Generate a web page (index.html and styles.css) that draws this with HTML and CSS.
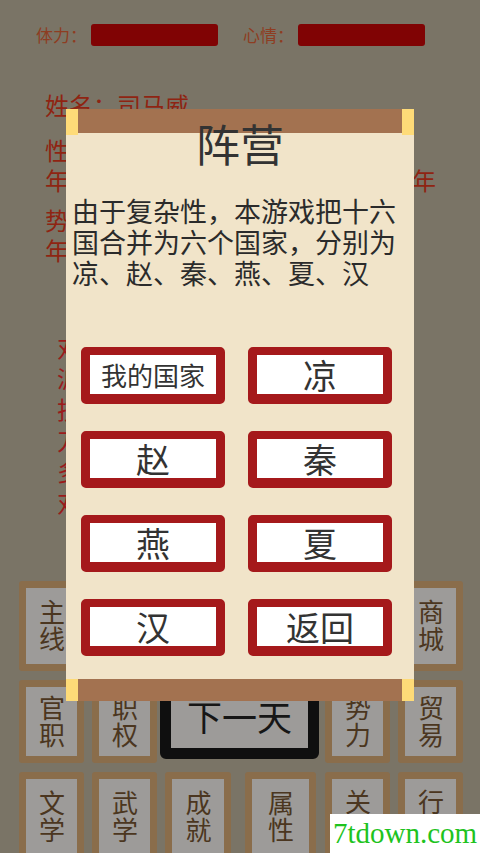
FILE: index.html
```html
<!DOCTYPE html>
<html lang="zh-CN">

<head>
    <meta charset="UTF-8">
    <meta name="viewport" content="width=device-width, initial-scale=1.0">
    <title>阵营</title>
    <link rel="stylesheet" href="styles.css">
</head>

<body>
    <div class="screen">
        <!-- 状态条 -->
        <div class="stats">
            <div class="stat">
                <span class="stat-label">体力：</span>
                <span class="stat-bar"></span>
            </div>
            <div class="stat">
                <span class="stat-label">心情：</span>
                <span class="stat-bar"></span>
            </div>
        </div>

        <!-- 人物信息 (大部分被弹窗挡住) -->
        <div class="profile">
            <p class="line">姓名：司马威</p>
            <p class="line gap-lg">性</p>
            <p class="line line-split"><span>年</span><span>年</span></p>
            <p class="line gap-sm">势</p>
            <p class="line">年</p>

            <div class="notes">
                <p>对</p>
                <p>派</p>
                <p>技</p>
                <p>刀</p>
                <p>多</p>
                <p>对</p>
            </div>
        </div>

        <!-- 底部菜单 -->
        <div class="menu">
            <div class="tile col-1"><span class="tile-text">主线</span></div>
            <div class="tile col-6"><span class="tile-text">商城</span></div>

            <div class="tile col-1"><span class="tile-text">官职</span></div>
            <div class="tile col-2"><span class="tile-text">职权</span></div>
            <button class="next-day">下一天</button>
            <div class="tile col-5"><span class="tile-text">势力</span></div>
            <div class="tile col-6"><span class="tile-text">贸易</span></div>

            <div class="tile col-1"><span class="tile-text">文学</span></div>
            <div class="tile col-2"><span class="tile-text">武学</span></div>
            <div class="tile col-3"><span class="tile-text">成就</span></div>
            <div class="tile col-4 narrow"><span class="tile-text">属性</span></div>
            <div class="tile col-5 top"><span class="tile-text">关</span></div>
            <div class="tile col-6 top"><span class="tile-text">行</span></div>
        </div>

        <!-- 阵营弹窗 -->
        <div class="dialog">
            <div class="dialog-bar">
                <span class="peg"></span>
                <span class="peg"></span>
            </div>
            <h1 class="dialog-title">阵营</h1>
            <p class="dialog-text">由于复杂性，本游戏把十六国合并为六个国家，分别为凉、赵、秦、燕、夏、汉</p>

            <div class="choices">
                <button class="choice small">我的国家</button>
                <button class="choice">凉</button>
                <button class="choice">赵</button>
                <button class="choice">秦</button>
                <button class="choice">燕</button>
                <button class="choice">夏</button>
                <button class="choice">汉</button>
                <button class="choice">返回</button>
            </div>

            <div class="dialog-bar bottom">
                <span class="peg"></span>
                <span class="peg"></span>
            </div>
        </div>

        <div class="watermark">7tdown.com</div>
    </div>
</body>

</html>
```

FILE: styles.css
```css
body {
    margin: 0;
    font-family: 'Noto Sans CJK SC', 'Noto Sans', sans-serif;
    background-color: #7a7466;
}

.screen {
    position: relative;
    width: 480px;
    height: 853px;
    overflow: hidden;
    display: flex;
    flex-direction: column;
    background-color: #7a7466;
}

/* 状态条 */
.stats {
    display: flex;
    padding: 24px 0 0 36px;
}

.stat {
    display: flex;
    align-items: center;
}

.stat + .stat {
    margin-left: 25px;
}

.stat-label {
    width: 55px;
    font-size: 17px;
    line-height: 22px;
    color: #8e3d22;
}

.stat-bar {
    width: 127px;
    height: 22px;
    border-radius: 3px;
    background-color: #800304;
}

/* 人物信息 */
.profile {
    padding: 44px 44px 0 45px;
    color: #8f2412;
    font-size: 24px;
}

.profile p {
    margin: 0;
    line-height: 30px;
}

.gap-lg {
    margin-top: 15px !important;
}

.gap-sm {
    margin-top: 10px !important;
}

.line-split {
    display: flex;
    justify-content: space-between;
}

.notes {
    margin: 66px 0 0 12px;
    color: #9b1b1b;
}

.notes p {
    line-height: 31px;
}

/* 底部菜单 */
.menu {
    margin-top: auto;
    height: 272px;
    padding-left: 19px;
    display: grid;
    grid-template-columns: 65px 65px 66px 78px 65px 65px;
    grid-template-rows: 90px 83px 90px;
    column-gap: 8px;
    row-gap: 9px;
}

.tile {
    display: flex;
    align-items: center;
    justify-content: center;
    border: 7px solid #8a6d4b;
    border-radius: 3px;
    background-color: #9d9b99;
    color: #4b3620;
    font-size: 26px;
}

/* 竖排的两个字 */
.tile-text {
    writing-mode: vertical-rl;
    text-orientation: upright;
    letter-spacing: 1px;
    line-height: 28px;
}

/* 只露出上半字的格子 */
.tile.top {
    align-items: flex-start;
    padding-top: 10px;
}

.col-1 { grid-column: 1; }
.col-2 { grid-column: 2; }
.col-3 { grid-column: 3; }
.col-4 { grid-column: 4; }
.col-5 { grid-column: 5; }
.col-6 { grid-column: 6; }

.tile.narrow {
    justify-self: end;
    width: 57px;
    margin-right: 1px;
}

.next-day {
    grid-column: 3 / 5;
    grid-row: 2;
    margin: 0 -2px 4px -5px;
    border: 11px solid #0f0f0f;
    border-radius: 6px;
    background-color: #9d9b99;
    color: #161616;
    font-family: inherit;
    font-size: 35px;
    line-height: 1;
    padding: 0 0 8px;
}

/* 阵营弹窗 */
.dialog {
    position: absolute;
    top: 109px;
    left: 66px;
    width: 348px;
    height: 592px;
    display: flex;
    flex-direction: column;
    background-color: #f1e4c9;
}

.dialog-bar {
    display: flex;
    justify-content: space-between;
    align-items: flex-start;
    height: 24px;
    background-color: #a37250;
}

.dialog-bar.bottom {
    margin-top: auto;
    height: 22px;
}

.peg {
    position: relative;
    z-index: 1;
    width: 12px;
    height: 26px;
    background-color: #fedb78;
}

.dialog-bar.bottom .peg {
    height: 22px;
}

.dialog-title {
    position: relative;
    margin: -15px 0 0;
    text-align: center;
    font-size: 44px;
    line-height: 50px;
    font-weight: normal;
    color: #333;
}

.dialog-text {
    margin: 27px 0 0;
    padding: 0 6px;
    font-size: 27px;
    line-height: 31px;
    color: #2b2b2b;
}

.choices {
    margin-top: 59px;
    padding-left: 15px;
    display: grid;
    grid-template-columns: 144px 144px;
    grid-auto-rows: 57px;
    column-gap: 23px;
    row-gap: 27px;
}

.choice {
    border-style: solid;
    border-color: #a5191b;
    border-width: 8px 9px 10px;
    border-radius: 5px;
    background-color: #fff;
    color: #333;
    font-family: inherit;
    font-size: 34px;
    line-height: 1;
    padding: 0;
}

.choice.small {
    font-size: 26px;
}

/* 水印 */
.watermark {
    position: absolute;
    right: 0;
    bottom: 0;
    width: 150px;
    height: 39px;
    background-color: #fff;
    color: #1ec31e;
    font-family: 'Liberation Serif', serif;
    font-size: 29px;
    line-height: 39px;
    text-align: center;
}
```
